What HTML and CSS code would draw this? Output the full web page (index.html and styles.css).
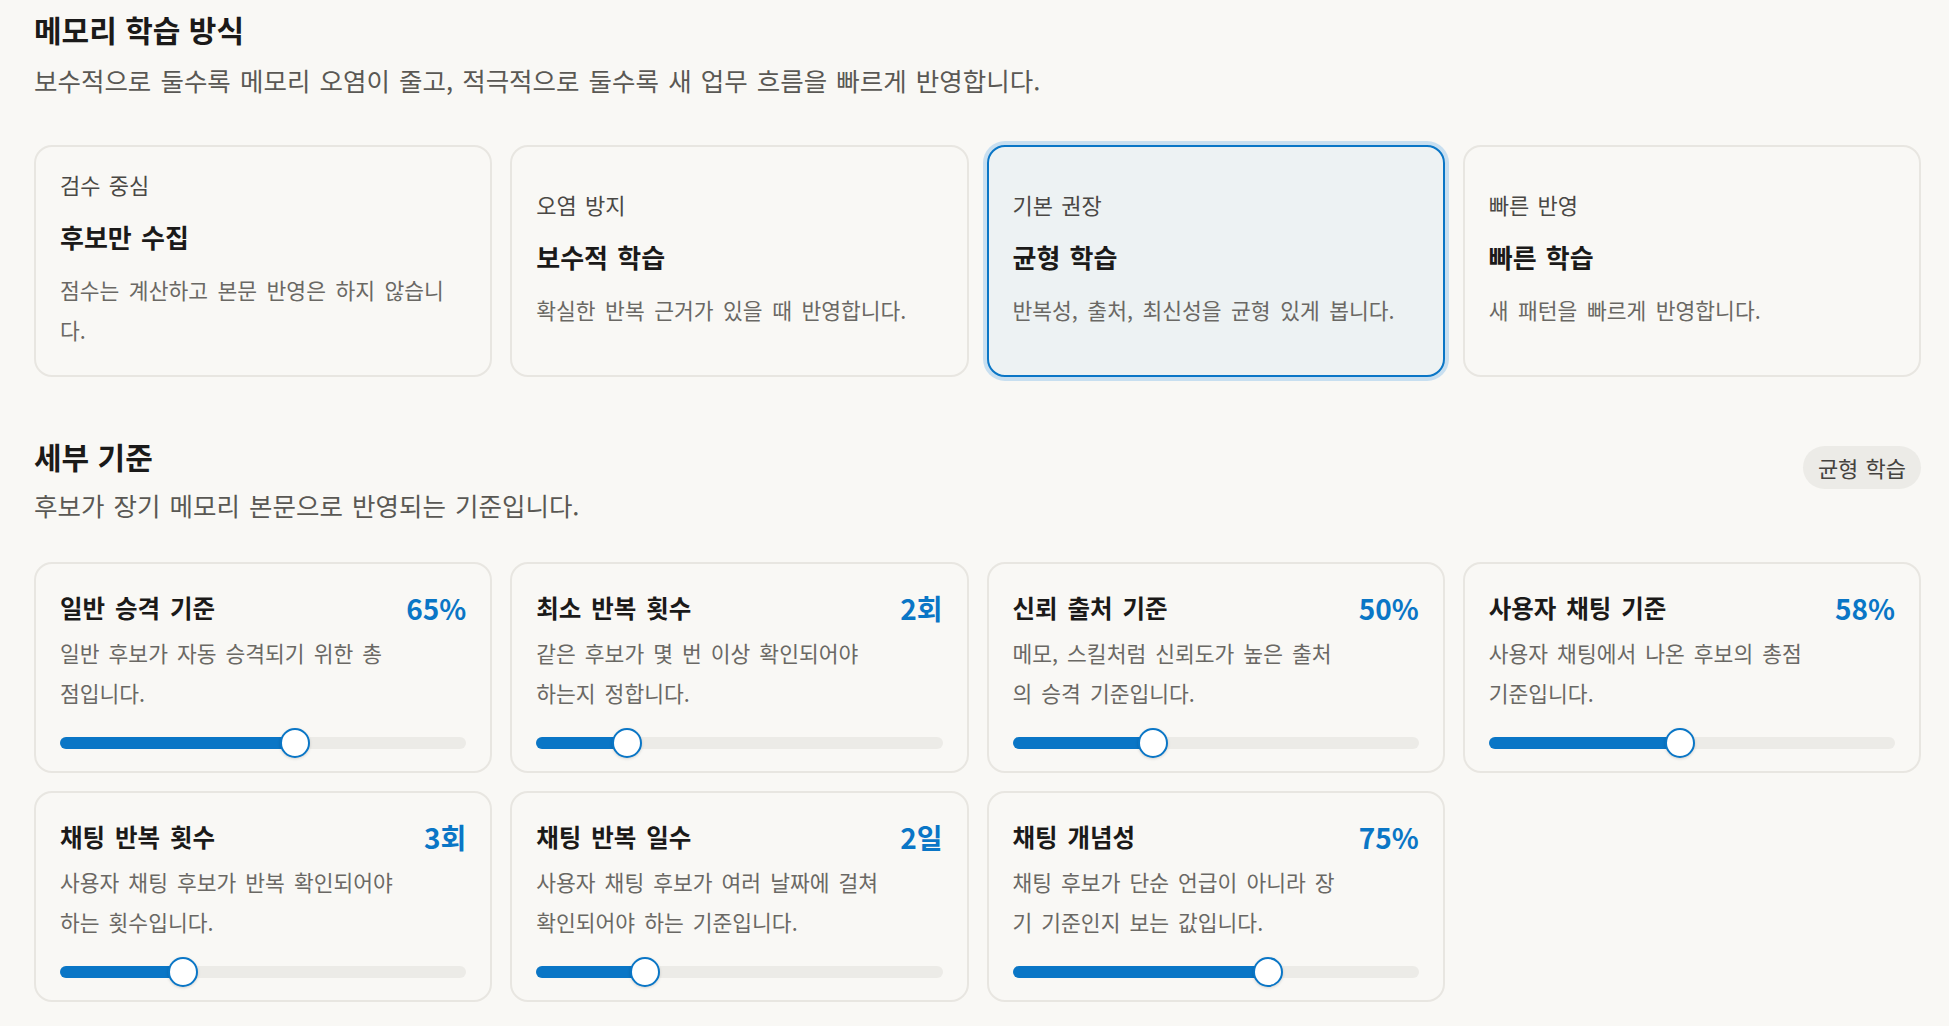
FILE: index.html
```html
<!DOCTYPE html>
<html lang="ko">
<head>
    <meta charset="UTF-8">
    <meta name="viewport" content="width=device-width, initial-scale=1.0">
    <title>메모리 학습 방식</title>
    <link rel="stylesheet" href="styles.css">
</head>
<body>

  <section class="section">
    <h1 class="section-title">메모리 학습 방식</h1>
    <p class="section-desc">보수적으로 둘수록 메모리 오염이 줄고, 적극적으로 둘수록 새 업무 흐름을 빠르게 반영합니다.</p>

    <div class="mode-grid">
      <div class="mode-card">
        <div class="mode-label">검수 중심</div>
        <div class="mode-name">후보만 수집</div>
        <div class="mode-text">점수는 계산하고 본문 반영은 하지 않습니다.</div>
      </div>
      <div class="mode-card">
        <div class="mode-label">오염 방지</div>
        <div class="mode-name">보수적 학습</div>
        <div class="mode-text">확실한 반복 근거가 있을 때 반영합니다.</div>
      </div>
      <div class="mode-card selected">
        <div class="mode-label">기본 권장</div>
        <div class="mode-name">균형 학습</div>
        <div class="mode-text">반복성, 출처, 최신성을 균형 있게 봅니다.</div>
      </div>
      <div class="mode-card">
        <div class="mode-label">빠른 반영</div>
        <div class="mode-name">빠른 학습</div>
        <div class="mode-text">새 패턴을 빠르게 반영합니다.</div>
      </div>
    </div>
  </section>

  <section class="section detail">
    <div class="detail-head">
      <div>
        <h2 class="section-title">세부 기준</h2>
        <p class="section-desc small">후보가 장기 메모리 본문으로 반영되는 기준입니다.</p>
      </div>
      <span class="badge">균형 학습</span>
    </div>

    <div class="rule-grid">
      <div class="rule-card">
        <div class="rule-top">
          <div class="rule-info">
            <div class="rule-name">일반 승격 기준</div>
            <div class="rule-text">일반 후보가 자동 승격되기 위한 총점입니다.</div>
          </div>
          <div class="rule-value">65%</div>
        </div>
        <div class="slider"><div class="slider-fill" style="width: 57.9%"></div><span class="slider-thumb" style="left: 57.9%"></span></div>
      </div>

      <div class="rule-card">
        <div class="rule-top">
          <div class="rule-info">
            <div class="rule-name">최소 반복 횟수</div>
            <div class="rule-text">같은 후보가 몇 번 이상 확인되어야 하는지 정합니다.</div>
          </div>
          <div class="rule-value">2회</div>
        </div>
        <div class="slider"><div class="slider-fill" style="width: 22.4%"></div><span class="slider-thumb" style="left: 22.4%"></span></div>
      </div>

      <div class="rule-card">
        <div class="rule-top">
          <div class="rule-info">
            <div class="rule-name">신뢰 출처 기준</div>
            <div class="rule-text">메모, 스킬처럼 신뢰도가 높은 출처의 승격 기준입니다.</div>
          </div>
          <div class="rule-value">50%</div>
        </div>
        <div class="slider"><div class="slider-fill" style="width: 34.7%"></div><span class="slider-thumb" style="left: 34.7%"></span></div>
      </div>

      <div class="rule-card">
        <div class="rule-top">
          <div class="rule-info">
            <div class="rule-name">사용자 채팅 기준</div>
            <div class="rule-text">사용자 채팅에서 나온 후보의 총점 기준입니다.</div>
          </div>
          <div class="rule-value">58%</div>
        </div>
        <div class="slider"><div class="slider-fill" style="width: 47%"></div><span class="slider-thumb" style="left: 47%"></span></div>
      </div>

      <div class="rule-card">
        <div class="rule-top">
          <div class="rule-info">
            <div class="rule-name">채팅 반복 횟수</div>
            <div class="rule-text">사용자 채팅 후보가 반복 확인되어야 하는 횟수입니다.</div>
          </div>
          <div class="rule-value">3회</div>
        </div>
        <div class="slider"><div class="slider-fill" style="width: 30.3%"></div><span class="slider-thumb" style="left: 30.3%"></span></div>
      </div>

      <div class="rule-card">
        <div class="rule-top">
          <div class="rule-info">
            <div class="rule-name">채팅 반복 일수</div>
            <div class="rule-text">사용자 채팅 후보가 여러 날짜에 걸쳐 확인되어야 하는 기준입니다.</div>
          </div>
          <div class="rule-value">2일</div>
        </div>
        <div class="slider"><div class="slider-fill" style="width: 26.8%"></div><span class="slider-thumb" style="left: 26.8%"></span></div>
      </div>

      <div class="rule-card">
        <div class="rule-top">
          <div class="rule-info">
            <div class="rule-name">채팅 개념성</div>
            <div class="rule-text">채팅 후보가 단순 언급이 아니라 장기 기준인지 보는 값입니다.</div>
          </div>
          <div class="rule-value">75%</div>
        </div>
        <div class="slider"><div class="slider-fill" style="width: 62.8%"></div><span class="slider-thumb" style="left: 62.8%"></span></div>
      </div>
    </div>
  </section>

</body>
</html>
```

FILE: styles.css
```css
body {
  margin: 0;
  padding: 11px 28px 0 34px;
  background-color: #f9f8f5;
  color: #1b1a19;
  font-family: "Noto Sans CJK KR", "Noto Sans", sans-serif;
}

.section-title {
  margin: 0;
  font-size: 30px;
  line-height: 36px;
  font-weight: 700;
  color: #1b1a19;
}

.section-desc {
  margin: 15px 0 0;
  font-size: 25.5px;
  line-height: 36px;
  color: #5a5854;
  word-spacing: 2px;
}

.section-desc.small {
  margin-top: 13px;
}

/* learning mode cards */
.mode-grid {
  display: grid;
  grid-template-columns: repeat(4, 1fr);
  gap: 18px;
  margin-top: 47px;
}

.mode-card {
  display: flex;
  flex-direction: column;
  justify-content: center;
  min-height: 232px;
  box-sizing: border-box;
  padding: 20px 24px 24px;
  border: 2px solid #e8e6e1;
  border-radius: 18px;
  background-color: #f9f8f5;
}

.mode-card.selected {
  border-color: #0a76c6;
  background-color: #edf2f3;
  box-shadow: 0 0 0 4px #c8dff0;
}

.mode-label {
  font-size: 22px;
  line-height: 30px;
  color: #4a4845;
  word-spacing: 2px;
}

.mode-name {
  margin-top: 22px;
  font-size: 26px;
  line-height: 32px;
  font-weight: 700;
  color: #1b1a19;
  word-spacing: 2px;
}

.mode-text {
  margin-top: 17px;
  font-size: 21.5px;
  line-height: 40px;
  color: #6a6864;
  word-spacing: 3.5px;
}

/* detail rules */
.detail {
  margin-top: 61px;
}

.detail-head {
  display: flex;
  justify-content: space-between;
  align-items: flex-start;
}

.badge {
  margin-top: 8px;
  padding: 0 15px;
  height: 43px;
  line-height: 43px;
  border-radius: 22px;
  background-color: #ecebe7;
  font-size: 22px;
  color: #454340;
  word-spacing: 1px;
}

.rule-grid {
  display: grid;
  grid-template-columns: repeat(4, 1fr);
  gap: 18px;
  margin-top: 39px;
}

.rule-card {
  box-sizing: border-box;
  padding: 24px 24px 13px;
  border: 2px solid #e8e6e1;
  border-radius: 18px;
  background-color: #f9f8f5;
}

.rule-top {
  display: flex;
  justify-content: space-between;
  gap: 14px;
}

.rule-name {
  font-size: 24.5px;
  line-height: 40px;
  font-weight: 700;
  color: #1b1a19;
  word-spacing: 3px;
}

.rule-value {
  font-size: 28px;
  line-height: 40px;
  font-weight: 700;
  color: #0a76c6;
  white-space: nowrap;
}

.rule-text {
  margin-top: 5px;
  font-size: 21.5px;
  line-height: 40px;
  color: #6a6864;
  word-spacing: 3px;
}

.slider {
  position: relative;
  height: 12px;
  margin: 24px 0 9px;
  border-radius: 6px;
  background-color: #ecebe7;
}

.slider-fill {
  height: 100%;
  border-radius: 6px;
  background-color: #0a76c6;
}

.slider-thumb {
  position: absolute;
  top: -9px;
  width: 30px;
  height: 30px;
  margin-left: -15px;
  box-sizing: border-box;
  border: 2px solid #0a76c6;
  border-radius: 50%;
  background-color: #ffffff;
  box-shadow: 0 1px 3px rgba(0, 0, 0, 0.15);
}
```
